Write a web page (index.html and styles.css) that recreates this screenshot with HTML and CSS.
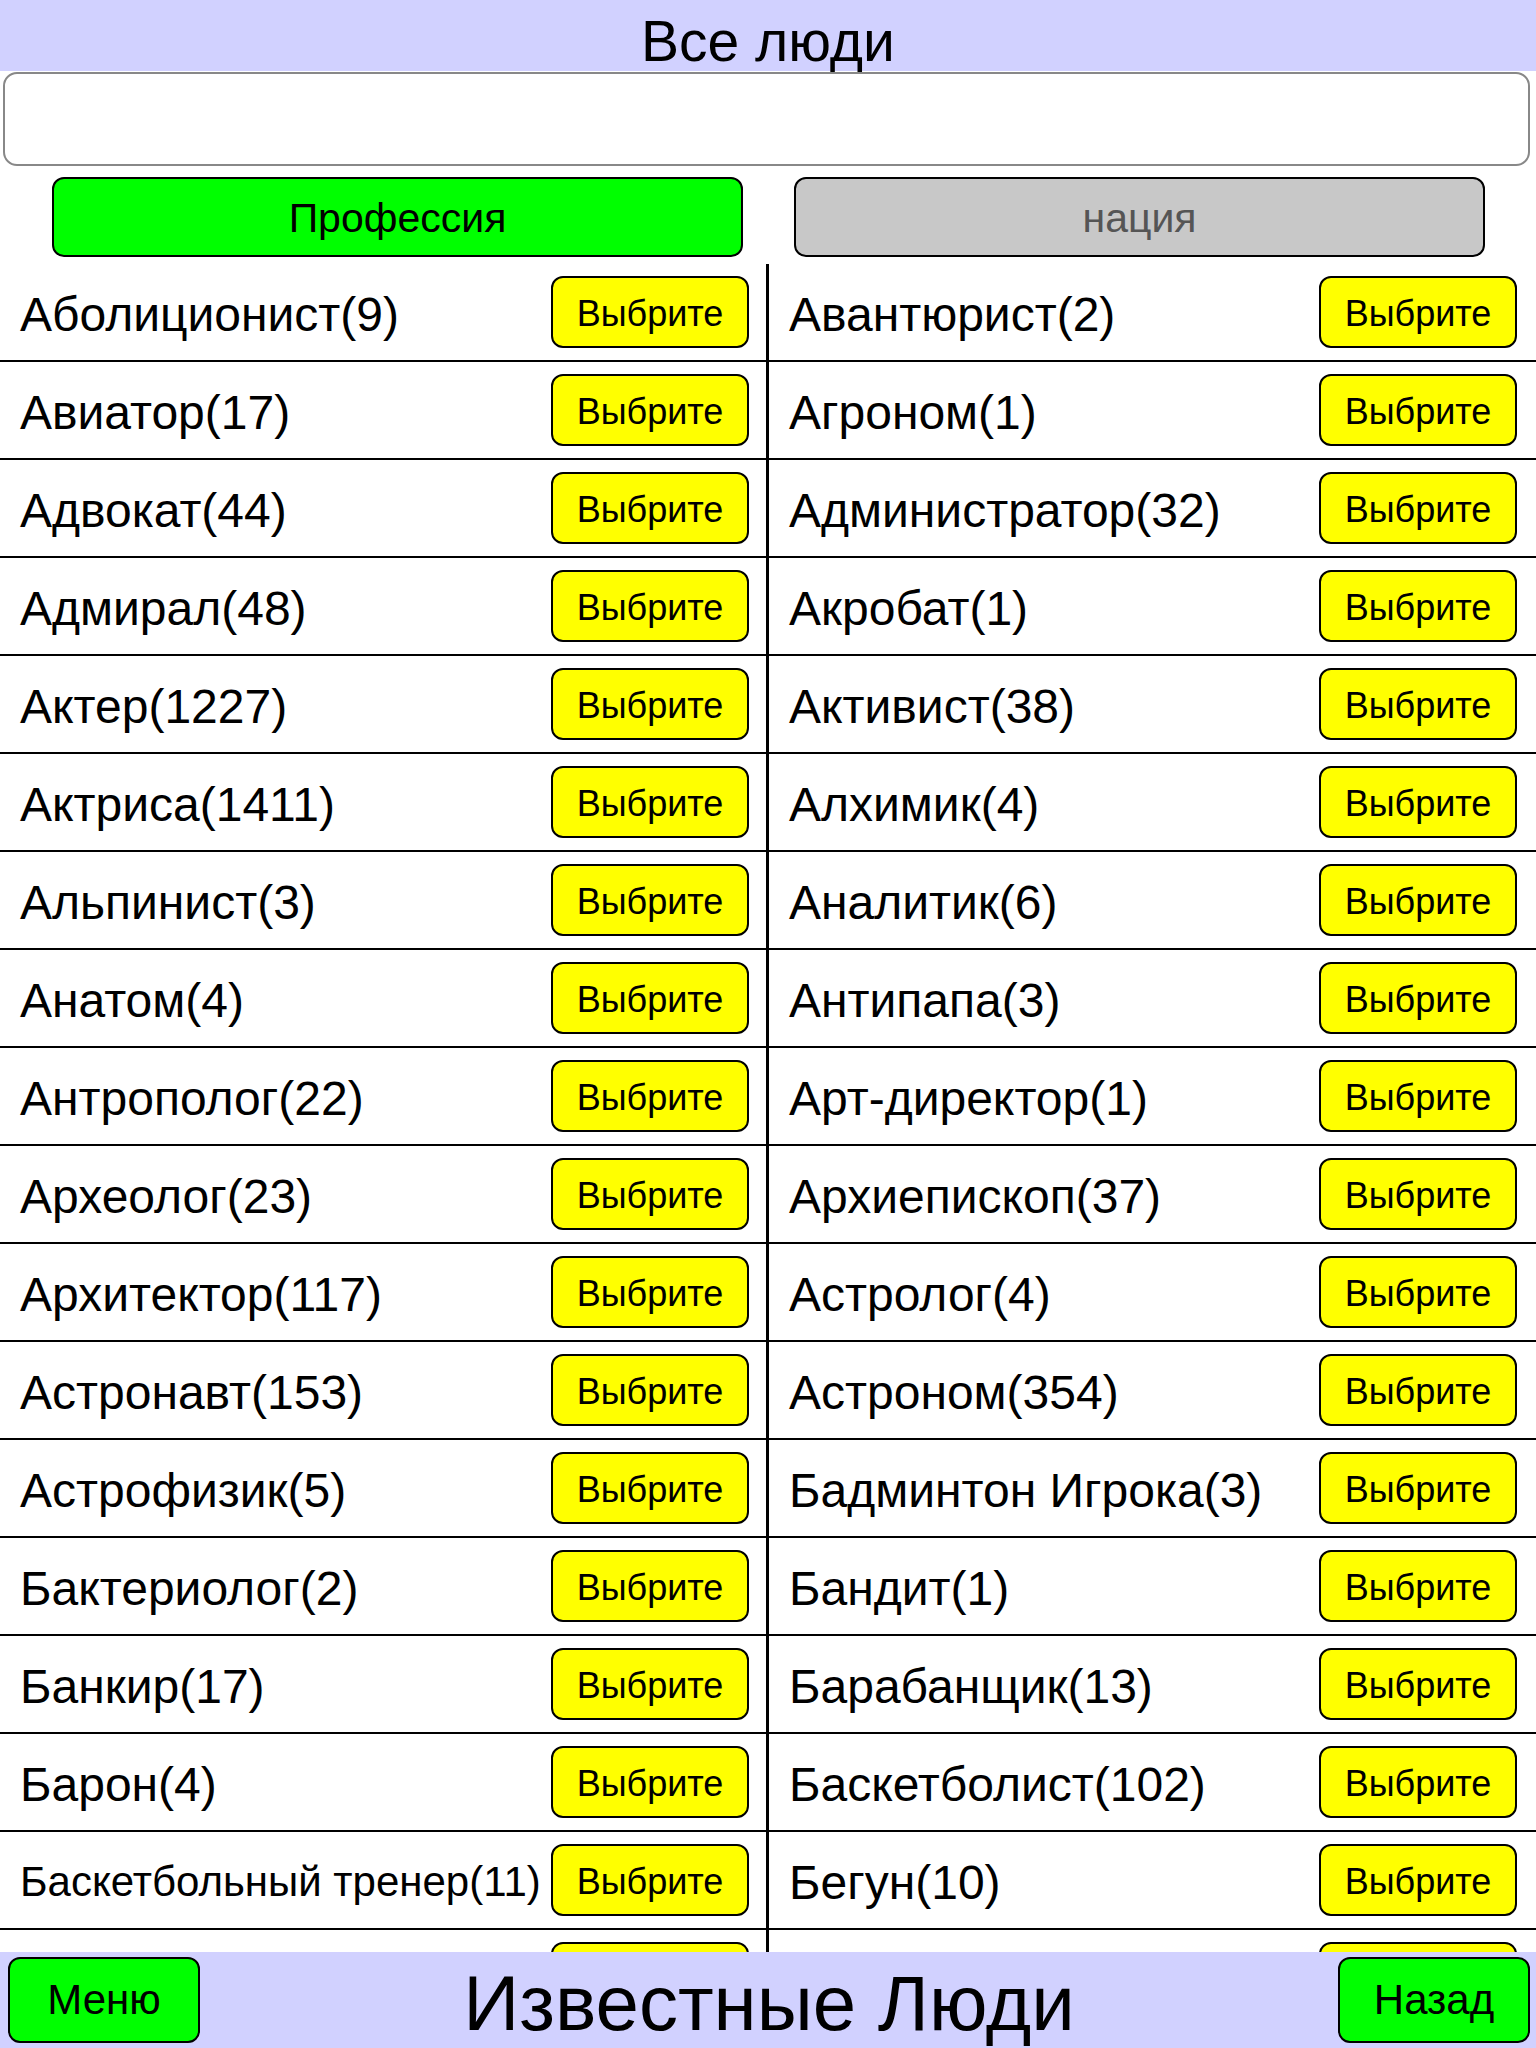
FILE: index.html
```html
<!DOCTYPE html>
<html lang="ru">
<head>
  <meta charset="utf-8">
  <title>Известные Люди</title>
  <link rel="stylesheet" href="styles.css">
</head>
<body>
  <div class="screen">
    <div class="top-bar">Все люди</div>

    <div class="search">
      <input type="text" class="search-input">
    </div>

    <div class="tabs">
      <button class="tab tab-active">Профессия</button>
      <button class="tab">нация</button>
    </div>

    <!-- Two columns of categories -->
    <div class="list">
      <div class="column column-left">
        <div class="row"><span class="label">Аболиционист(9)</span><button class="btn-pick">Выбрите</button></div>
        <div class="row"><span class="label">Авиатор(17)</span><button class="btn-pick">Выбрите</button></div>
        <div class="row"><span class="label">Адвокат(44)</span><button class="btn-pick">Выбрите</button></div>
        <div class="row"><span class="label">Адмирал(48)</span><button class="btn-pick">Выбрите</button></div>
        <div class="row"><span class="label">Актер(1227)</span><button class="btn-pick">Выбрите</button></div>
        <div class="row"><span class="label">Актриса(1411)</span><button class="btn-pick">Выбрите</button></div>
        <div class="row"><span class="label">Альпинист(3)</span><button class="btn-pick">Выбрите</button></div>
        <div class="row"><span class="label">Анатом(4)</span><button class="btn-pick">Выбрите</button></div>
        <div class="row"><span class="label">Антрополог(22)</span><button class="btn-pick">Выбрите</button></div>
        <div class="row"><span class="label">Археолог(23)</span><button class="btn-pick">Выбрите</button></div>
        <div class="row"><span class="label">Архитектор(117)</span><button class="btn-pick">Выбрите</button></div>
        <div class="row"><span class="label">Астронавт(153)</span><button class="btn-pick">Выбрите</button></div>
        <div class="row"><span class="label">Астрофизик(5)</span><button class="btn-pick">Выбрите</button></div>
        <div class="row"><span class="label">Бактериолог(2)</span><button class="btn-pick">Выбрите</button></div>
        <div class="row"><span class="label">Банкир(17)</span><button class="btn-pick">Выбрите</button></div>
        <div class="row"><span class="label">Барон(4)</span><button class="btn-pick">Выбрите</button></div>
        <div class="row"><span class="label label-fit">Баскетбольный тренер(11)</span><button class="btn-pick">Выбрите</button></div>
        <!-- next row is scrolled under the footer -->
        <div class="row"><span class="label"></span><button class="btn-pick"></button></div>
      </div>
      <div class="column column-right">
        <div class="row"><span class="label">Авантюрист(2)</span><button class="btn-pick">Выбрите</button></div>
        <div class="row"><span class="label">Агроном(1)</span><button class="btn-pick">Выбрите</button></div>
        <div class="row"><span class="label">Администратор(32)</span><button class="btn-pick">Выбрите</button></div>
        <div class="row"><span class="label">Акробат(1)</span><button class="btn-pick">Выбрите</button></div>
        <div class="row"><span class="label">Активист(38)</span><button class="btn-pick">Выбрите</button></div>
        <div class="row"><span class="label">Алхимик(4)</span><button class="btn-pick">Выбрите</button></div>
        <div class="row"><span class="label">Аналитик(6)</span><button class="btn-pick">Выбрите</button></div>
        <div class="row"><span class="label">Антипапа(3)</span><button class="btn-pick">Выбрите</button></div>
        <div class="row"><span class="label">Арт-директор(1)</span><button class="btn-pick">Выбрите</button></div>
        <div class="row"><span class="label">Архиепископ(37)</span><button class="btn-pick">Выбрите</button></div>
        <div class="row"><span class="label">Астролог(4)</span><button class="btn-pick">Выбрите</button></div>
        <div class="row"><span class="label">Астроном(354)</span><button class="btn-pick">Выбрите</button></div>
        <div class="row"><span class="label">Бадминтон Игрока(3)</span><button class="btn-pick">Выбрите</button></div>
        <div class="row"><span class="label">Бандит(1)</span><button class="btn-pick">Выбрите</button></div>
        <div class="row"><span class="label">Барабанщик(13)</span><button class="btn-pick">Выбрите</button></div>
        <div class="row"><span class="label">Баскетболист(102)</span><button class="btn-pick">Выбрите</button></div>
        <div class="row"><span class="label">Бегун(10)</span><button class="btn-pick">Выбрите</button></div>
        <div class="row"><span class="label"></span><button class="btn-pick"></button></div>
      </div>
    </div>

    <div class="bottom-bar">
      <button class="btn-nav">Меню</button>
      <span class="app-title">Известные Люди</span>
      <button class="btn-nav">Назад</button>
    </div>
  </div>
</body>
</html>
```

FILE: styles.css
```css
body {
  margin: 0;
  font-family: "Liberation Sans", Arial, sans-serif;
  background: white;
  color: #000;
}

.screen {
  display: flex;
  flex-direction: column;
  height: 100vh;
  overflow: hidden;
}

.top-bar {
  height: 71px;
  box-sizing: border-box;
  padding-top: 11px;
  line-height: 60px;
  background: #D1D1FF;
  text-align: center;
  font-size: 57px;
}

.search {
  padding: 1px 6px 0 3px;
}

.search-input {
  display: block;
  width: 100%;
  height: 94px;
  box-sizing: border-box;
  border: 2px solid #888;
  border-radius: 14px;
  background: white;
  outline: none;
  font-size: 40px;
  font-family: inherit;
}

.tabs {
  display: grid;
  grid-template-columns: 1fr 1fr;
  gap: 51px;
  padding: 0 51px 0 52px;
  margin-top: 11px;
}

.tab {
  height: 80px;
  border: 2px solid #000;
  border-radius: 12px;
  background: #C8C8C8;
  color: #555;
  font-size: 41px;
  font-family: inherit;
  padding: 2px 0 0;
}

.tab-active {
  background: #00FF00;
  color: #000;
}

.list {
  flex: 1;
  min-height: 0;
  overflow: hidden;
  display: grid;
  grid-template-columns: 769px 1fr;
  align-items: start;
  margin-top: 7px;
}

.column-left {
  border-right: 3px solid #000;
}

.row {
  display: flex;
  align-items: center;
  justify-content: space-between;
  height: 98px;
  box-sizing: border-box;
  border-bottom: 2px solid #000;
}

.column-left .row {
  padding: 0 17px 0 20px;
}

.column-right .row {
  padding: 0 19px 0 20px;
}

.label {
  font-size: 48px;
  white-space: nowrap;
  padding-top: 4px;
}

.label-fit {
  font-size: 42px;
}

.btn-pick {
  flex: none;
  width: 198px;
  height: 72px;
  border: 2px solid #000;
  border-radius: 12px;
  background: #FFFF00;
  font-size: 36px;
  font-family: inherit;
  color: #000;
  padding: 3px 0 0;
}

.bottom-bar {
  display: flex;
  align-items: center;
  justify-content: space-between;
  height: 96px;
  flex: none;
  padding: 0 6px 0 8px;
  background: #D1D1FF;
}

.btn-nav {
  width: 192px;
  height: 86px;
  border: 2px solid #000;
  border-radius: 12px;
  background: #00FF00;
  font-size: 42px;
  font-family: inherit;
  color: #000;
  padding: 0;
}

.app-title {
  font-size: 78px;
  padding-top: 6px;
}
```
